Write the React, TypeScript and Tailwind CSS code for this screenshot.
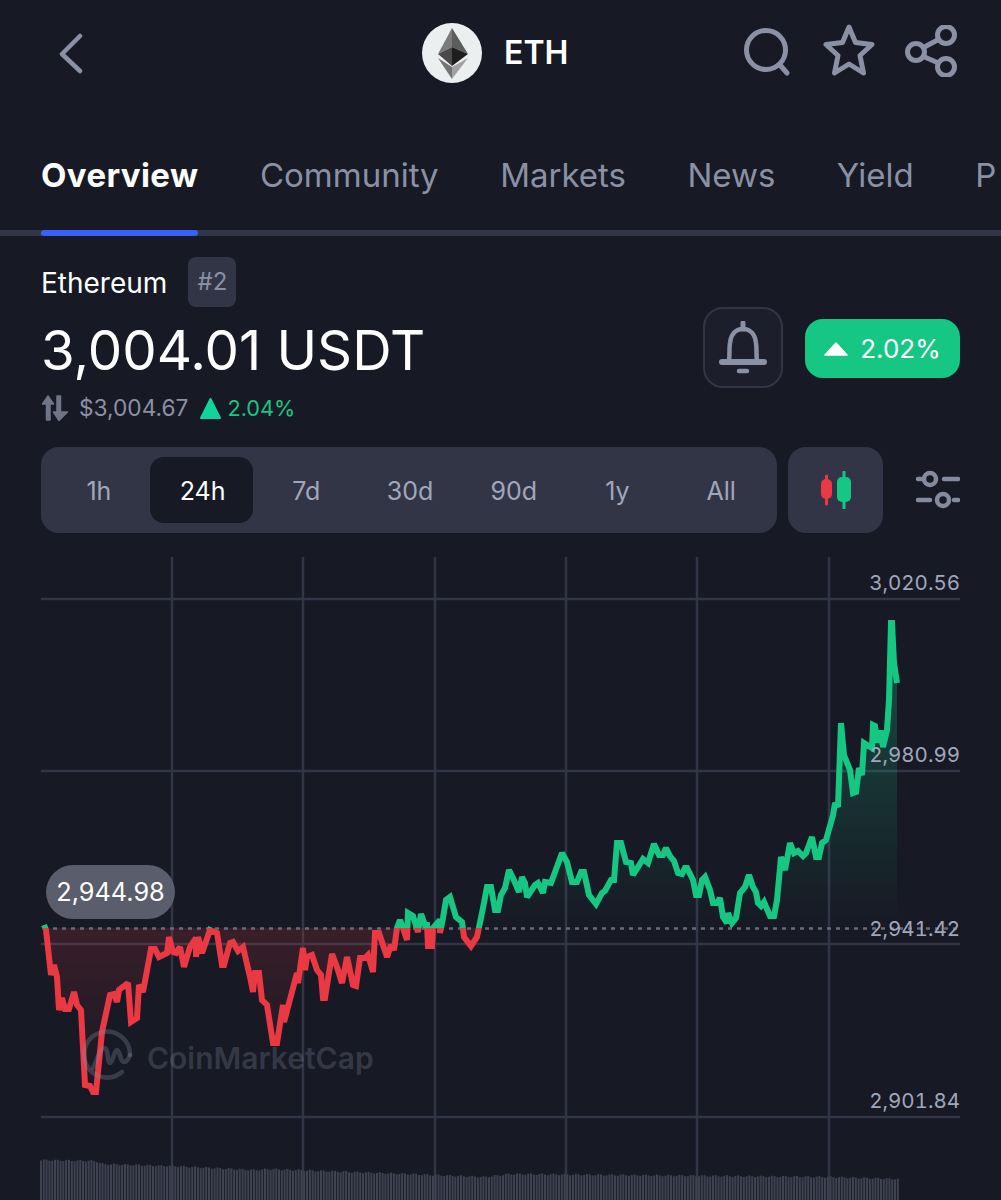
import React from 'react';

const sans = { fontFamily: 'Inter, "Liberation Sans", sans-serif' };

const line: [number, number][] = [
  [44,925],[46,930],[51,975],[54,965],[57,977],[59,1010],[62,998],[65,1009],[69,1009],[74,992],[77,1005],[81,1010],[85,1085],[90,1086],[93,1092],[96,1092],[102,1032],[110,995],[114,994],[117,1002],[119,990],[128,983],[131,1022],[137,1018],[139,985],[143,992],[151,949],[155,949],[159,957],[167,953],[169,937],[173,952],[176,953],[180,947],[184,967],[190,947],[196,938],[196,957],[198,937],[202,953],[210,930],[217,933],[222,965],[224,965],[230,943],[233,942],[238,951],[243,947],[250,977],[253,992],[255,973],[259,973],[262,1000],[267,1005],[273,1043],[277,1043],[283,1005],[284,1022],[297,973],[298,983],[303,948],[305,970],[307,957],[312,955],[317,970],[321,975],[323,998],[325,998],[332,954],[337,967],[342,983],[347,957],[353,985],[356,986],[360,958],[365,958],[368,955],[373,972],[375,933],[379,933],[387,957],[391,945],[394,950],[397,928],[400,920],[403,928],[407,940],[408,913],[413,916],[418,932],[421,914],[425,925],[427,925],[428,946],[432,946],[433,928],[440,920],[440,933],[443,918],[446,900],[450,897],[456,917],[462,922],[464,937],[471,946],[477,937],[483,908],[487,887],[491,887],[495,910],[498,910],[501,895],[505,888],[509,870],[513,878],[519,892],[522,877],[525,883],[527,897],[535,885],[538,883],[543,893],[545,882],[551,883],[562,853],[567,862],[572,882],[577,882],[581,872],[584,872],[589,895],[596,904],[602,893],[605,891],[611,880],[614,880],[617,843],[621,843],[626,862],[631,863],[633,875],[643,859],[648,863],[654,844],[659,855],[663,855],[666,848],[670,856],[674,861],[678,873],[682,874],[685,868],[687,868],[693,880],[696,895],[699,895],[702,880],[705,877],[710,890],[713,903],[717,903],[720,898],[723,917],[727,923],[728,913],[732,923],[736,918],[740,893],[745,887],[749,875],[753,887],[756,892],[758,903],[761,906],[764,902],[770,916],[774,916],[777,900],[781,857],[785,870],[790,843],[794,853],[798,851],[803,856],[806,853],[812,837],[816,857],[819,857],[822,843],[826,840],[828,833],[833,815],[835,803],[838,807],[841,723],[844,755],[850,770],[853,793],[856,792],[859,768],[862,775],[864,743],[872,748],[873,725],[875,726],[877,743],[878,733],[881,733],[883,747],[887,730],[889,700],[891,623],[892,623],[894,663],[897,683],
];
const linePoints = line.map(p => p.join(',')).join(' ');
const areaPoints = `44,928 ${linePoints} 897,928`;

const volumeTop: [number, number][] = [[41,1160],[96,1161],[102,1164],[172,1166],[255,1170],[268,1169],[408,1174],[485,1177],[510,1174],[830,1177],[898,1179]];
const volumeAt = (x: number) => {
  let y = 1179;
  for (let i = 1; i < volumeTop.length; i++) {
    const [x0, y0] = volumeTop[i - 1];
    const [x1, y1] = volumeTop[i];
    if (x <= x1) {
      y = y0 + ((x - x0) / (x1 - x0)) * (y1 - y0);
      break;
    }
  }
  return y + Math.sin(x * 1.7) * 0.8;
};
const volumeBars: number[] = [];
for (let x = 41; x < 898; x += 2.8) volumeBars.push(x);

const tabs = ['Community', 'Markets', 'News', 'Yield', 'P'];
const ranges = ['1h', '24h', '7d', '30d', '90d', '1y', 'All'];
const verticals = [172, 303, 435, 566, 697, 829];
const horizontals = [599, 771, 944, 1117];

const EthLogo = () => (
  <svg viewBox="0 0 60 60" className="w-[60px] h-[60px]">
    <circle cx="30" cy="30" r="30" fill="#eceff0" />
    <polygon points="30,5 16,31 30,24" fill="#7b7b7b" />
    <polygon points="30,5 46,31 30,24" fill="#5c5c5c" />
    <polygon points="16,31 30,24 30,43" fill="#4a4a4a" />
    <polygon points="46,31 30,24 30,43" fill="#1e1e1e" />
    <polygon points="16,35 30,44 30,56" fill="#737373" />
    <polygon points="46,35 30,44 30,56" fill="#a2a2a2" />
  </svg>
);

const App = () => {
  return (
    <div className="w-[1001px] h-[1200px] overflow-hidden bg-[#171924] text-white" style={sans}>
      <div className="h-[107px] pt-[22px] pl-[41px] pr-[44px] flex items-start justify-between">
        <svg viewBox="0 0 42 60" className="w-[42px] h-[60px]" fill="none" stroke="#8a91a5" strokeWidth="4.5" strokeLinecap="round" strokeLinejoin="round">
          <path d="M39 14 21 32 39 49" />
        </svg>
        <div className="absolute left-[422px] top-[23px] flex items-center gap-[22px]">
          <EthLogo />
          <span className="text-[32px] font-semibold">ETH</span>
        </div>
        <div className="flex items-start gap-[32px]">
          <svg viewBox="0 0 50 50" className="w-[50px] h-[50px] mt-[5px]" fill="none" stroke="#8a91a5" strokeWidth="5" strokeLinecap="round">
            <circle cx="24" cy="23" r="19.5" />
            <path d="M38 38 45 46" />
          </svg>
          <svg viewBox="0 0 52 52" className="w-[52px] h-[52px] mt-[2px] -ml-[1px]" fill="none" stroke="#8a91a5" strokeWidth="5" strokeLinejoin="round">
            <path d="M26 3 32.5 18.5 49 20.5 37 31.5 40.5 49 26 40 11.5 49 15 31.5 3 20.5 19.5 18.5Z" />
          </svg>
          <svg viewBox="0 0 52 52" className="w-[52px] h-[52px] mt-[3px] -ml-[2px]" fill="none" stroke="#8a91a5" strokeWidth="5">
            <circle cx="41" cy="10" r="8.5" />
            <circle cx="11" cy="27" r="8.5" />
            <circle cx="41" cy="42" r="8.5" />
            <path d="M18.5 22.5 33.5 14.5M18.5 31.5 33.5 38" />
          </svg>
        </div>
      </div>

      <div className="h-[129px] flex flex-col">
        <div className="h-[123px] pl-[41px] pt-[46px] flex items-start gap-[61.5px] text-[33px] leading-[44px] text-[#8a91a5] overflow-hidden whitespace-nowrap">
          <span className="font-bold tracking-[0.4px] text-white">Overview</span>
          {tabs.map(t => (
            <span key={t}>{t}</span>
          ))}
        </div>
        <div className="h-[6px] bg-[#323546]">
          <div className="ml-[41px] w-[157px] h-[6px] rounded-sm bg-[#3861fb]" />
        </div>
      </div>

      <div className="pl-[41px] pr-[41px] pt-[21px] flex justify-between">
        <div>
          <div className="flex items-center gap-[21px] h-[50px]">
            <span className="text-[28px] pt-[2px]">Ethereum</span>
            <span className="w-[48px] h-[50px] rounded-[8px] bg-[#323546] flex items-center justify-center text-[24px] text-[#8a91a5]">#2</span>
          </div>
          <div className="text-[54.6px] leading-[66px] mt-[10px]">3,004.01 USDT</div>
          <div className="flex items-center h-[34px] mt-[8px]">
            <svg viewBox="0 0 28 28" className="w-[28px] h-[28px]" fill="#6f7586" stroke="#6f7586" strokeWidth="1.5" strokeLinejoin="round">
              <path d="M7 2 12.5 10H9V26H5.5V10H1.5ZM16 2H19.5V18H26.5L18 26.5 12.5 18H16Z" />
            </svg>
            <span className="ml-[10px] text-[22.7px] text-[#8a91a5]">$3,004.67</span>
            <svg viewBox="0 0 21 22" className="ml-[12px] w-[21px] h-[22px]" fill="#10d49a" stroke="#10d49a" strokeWidth="2" strokeLinejoin="round">
              <path d="M10.5 2 20 21H1Z" />
            </svg>
            <span className="ml-[6px] text-[21.7px] text-[#16c784]">2.04%</span>
          </div>
        </div>
        <div className="flex items-center gap-[22px] h-[81px] mt-[50px]">
          <div className="w-[80px] h-[81px] rounded-[20px] border-2 border-[#323546] bg-[#1c1f2b] flex items-center justify-center">
            <svg viewBox="0 0 48 54" className="w-[48px] h-[54px]" fill="none" stroke="#8a91a5" strokeWidth="4.5" strokeLinecap="round" strokeLinejoin="round">
              <path d="M24 2V8" strokeWidth="5" />
              <path d="M10 40C11 32 10 26 11 22 12 13 17 8 24 8 31 8 36 13 37 22 38 28 37 34 38 40" />
              <path d="M3 41H45" strokeWidth="6" />
              <path d="M20 50H28" strokeWidth="4.5" />
            </svg>
          </div>
          <div className="w-[155px] h-[59px] mt-[2px] rounded-[18px] bg-[#16c784] flex items-center justify-center gap-[12px]">
            <svg viewBox="0 0 24 14" className="w-[24px] h-[14px]" fill="#ffffff">
              <path d="M12 1 23 13H1Z" strokeLinejoin="round" stroke="#ffffff" strokeWidth="1.5" />
            </svg>
            <span className="text-[26px]">2.02%</span>
          </div>
        </div>
      </div>

      <div className="pl-[41px] pr-[41px] mt-[22px] flex items-center">
        <div className="w-[736px] h-[86px] rounded-[18px] bg-[#323546] px-[5px] flex items-center">
          {ranges.map(r => (
            <div
              key={r}
              className={
                r === '24h'
                  ? 'w-[104px] h-[66px] pt-[3px] pl-[2px] rounded-[14px] bg-[#171924] flex items-center justify-center text-[25px] text-white'
                  : 'w-[104px] h-[66px] pt-[3px] pl-[2px] flex items-center justify-center text-[25px] text-[#a1a7bb]'
              }
            >
              {r}
            </div>
          ))}
        </div>
        <div className="ml-[11px] w-[95px] h-[86px] rounded-[18px] bg-[#323546] flex items-center justify-center">
          <svg viewBox="0 0 33 38" className="w-[33px] h-[38px]">
            <path d="M7.5 5V33" stroke="#ea3943" strokeWidth="3" strokeLinecap="round" />
            <rect x="2" y="8" width="11" height="20" rx="5" fill="#ea3943" />
            <path d="M25 1V37" stroke="#16c784" strokeWidth="3" strokeLinecap="round" />
            <rect x="18" y="6" width="14" height="25" rx="5" fill="#16c784" />
          </svg>
        </div>
        <svg viewBox="0 0 46 42" className="ml-[31px] w-[46px] h-[42px]" fill="none" stroke="#858b9e" strokeWidth="4.5" strokeLinecap="round">
          <circle cx="16" cy="10" r="6" />
          <path d="M4 10H7M30 10H44M4 31H16" />
          <circle cx="29" cy="31" r="6" />
          <path d="M40 31H44" />
        </svg>
      </div>

      <div className="relative mt-[24px] h-[643px]">
        <svg viewBox="0 557 1001 643" className="block w-[1001px] h-[643px]">
          <defs>
            <linearGradient id="greenFill" gradientUnits="userSpaceOnUse" x1="0" y1="623" x2="0" y2="928">
              <stop offset="0" stopColor="#16c784" stopOpacity="0.32" />
              <stop offset="1" stopColor="#16c784" stopOpacity="0" />
            </linearGradient>
            <linearGradient id="redFill" gradientUnits="userSpaceOnUse" x1="0" y1="928" x2="0" y2="1092">
              <stop offset="0" stopColor="#ea3943" stopOpacity="0.16" />
              <stop offset="1" stopColor="#ea3943" stopOpacity="0" />
            </linearGradient>
            <clipPath id="aboveBase">
              <rect x="0" y="500" width="1001" height="428" />
            </clipPath>
            <clipPath id="belowBase">
              <rect x="0" y="928" width="1001" height="300" />
            </clipPath>
          </defs>
          {horizontals.map(y => (
            <line key={y} x1="41" x2="960" y1={y} y2={y} stroke="#323546" strokeWidth="2.5" />
          ))}
          {verticals.map(x => (
            <line key={x} x1={x} x2={x} y1="557" y2="1200" stroke="#323546" strokeWidth="2.5" />
          ))}
          {volumeBars.map(x => (
            <line key={x} x1={x} x2={x} y1={volumeAt(x)} y2="1200" stroke="#3f4250" strokeWidth="2" />
          ))}
          <polygon points={areaPoints} fill="url(#greenFill)" clipPath="url(#aboveBase)" />
          <polygon points={areaPoints} fill="url(#redFill)" clipPath="url(#belowBase)" />
          <line x1="44" x2="960" y1="928.5" y2="928.5" stroke="#666a7a" strokeWidth="2.5" strokeDasharray="4 5" />
          <polyline points={linePoints} fill="none" stroke="#16c784" strokeWidth="6" strokeLinejoin="miter" strokeMiterlimit="2" clipPath="url(#aboveBase)" />
          <polyline points={linePoints} fill="none" stroke="#ea3943" strokeWidth="6" strokeLinejoin="miter" strokeMiterlimit="2" clipPath="url(#belowBase)" />
          <g stroke="#808a9d" strokeOpacity="0.32" fill="none" strokeWidth="4.5" strokeLinecap="round" strokeLinejoin="round">
            <path d="M130 1055A23 23 0 1 0 122 1072" />
            <path d="M93 1068C97 1060 100 1048 104 1048 109 1048 107 1063 110 1063 113 1063 114 1050 117 1050 120 1050 120 1062 124 1062 127 1062 129 1058 130 1055" />
          </g>
        </svg>
        <span className="absolute left-[147px] top-[481px] text-[30px] leading-[40px] font-semibold text-[#808a9d]/30">CoinMarketCap</span>
        <span className="absolute left-[46px] top-[308px] w-[129px] h-[54px] rounded-full bg-[#595d6c] flex items-center justify-center text-[25.3px]">2,944.98</span>
        <span className="absolute right-[41px] top-[12px] text-[20.5px] leading-[28px] tabular-nums text-[#a1a7bb]">3,020.56</span>
        <span className="absolute right-[41px] top-[184px] text-[20.5px] leading-[28px] tabular-nums text-[#a1a7bb]">2,980.99</span>
        <span className="absolute right-[41px] top-[358px] text-[20.5px] leading-[28px] tabular-nums text-[#a1a7bb]">2,941.42</span>
        <span className="absolute right-[41px] top-[530px] text-[20.5px] leading-[28px] tabular-nums text-[#a1a7bb]">2,901.84</span>
      </div>
    </div>
  );
};

export default App;
